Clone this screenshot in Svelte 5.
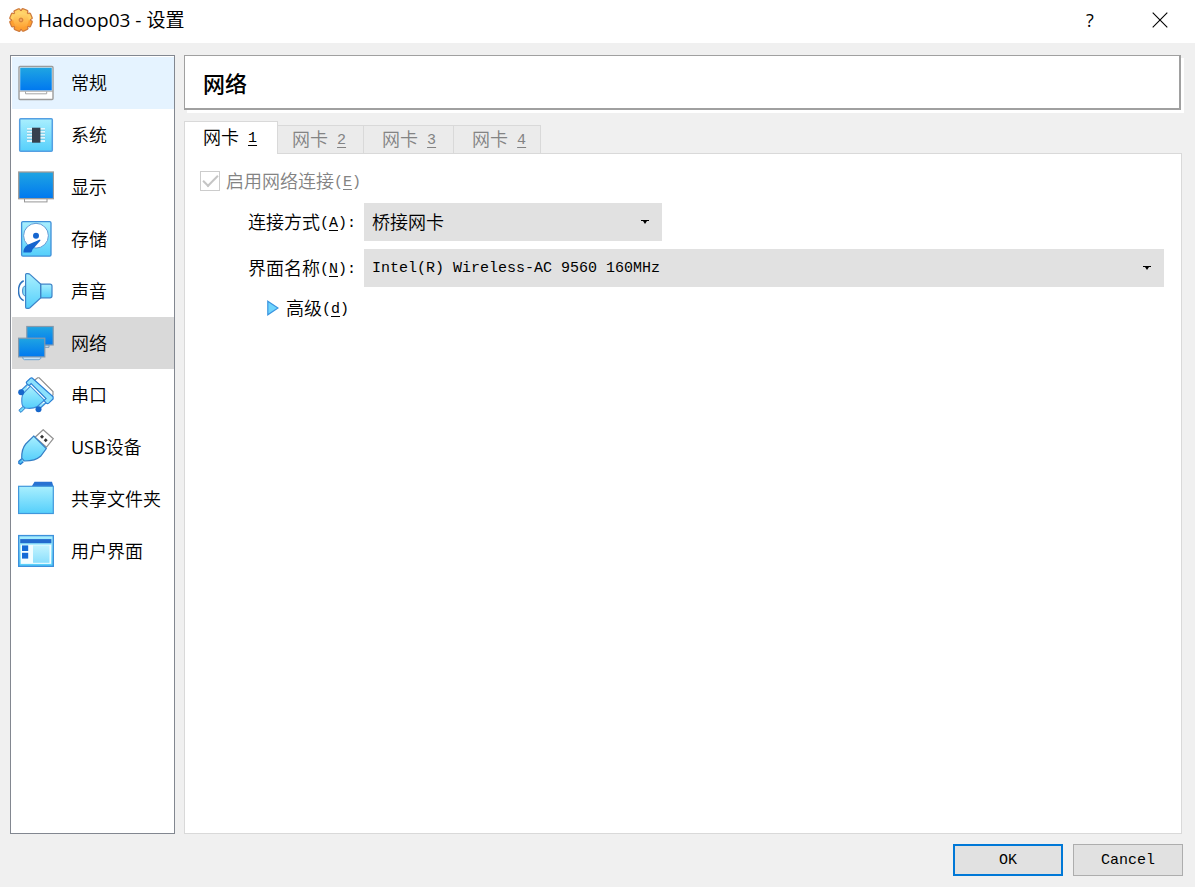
<script>
  const sections = [
    { id: 'general', label: '常规' },
    { id: 'system', label: '系统' },
    { id: 'display', label: '显示' },
    { id: 'storage', label: '存储' },
    { id: 'audio', label: '声音' },
    { id: 'network', label: '网络' },
    { id: 'serial', label: '串口' },
    { id: 'usb', prefix: 'USB', label: '设备' },
    { id: 'folders', label: '共享文件夹' },
    { id: 'interface', label: '用户界面' }
  ];
  const adapters = [1, 2, 3, 4];
  const teeth = [22, 67, 112, 157, 202, 247, 292, 337];
</script>

<div class="dialog">
  <header class="titlebar">
    <svg class="gear" viewBox="0 0 24 24" aria-hidden="true">
      <defs>
        <linearGradient id="gold" gradientUnits="userSpaceOnUse" x1="0" y1="2" x2="0" y2="22">
          <stop offset="0" stop-color="#ffe07a" />
          <stop offset="1" stop-color="#ff9a2a" />
        </linearGradient>
      </defs>
      <g fill="#cf7a3c" stroke="#cf7a3c" stroke-width="1.6">
        <circle cx="12" cy="12" r="9" />
        {#each teeth as a}
          <rect x="9" y="1" width="6" height="5" rx="1" transform="rotate({a} 12 12)" />
        {/each}
      </g>
      <circle cx="12" cy="12" r="9" fill="url(#gold)" />
      {#each teeth as a}
        <rect x="9.3" y="1.4" width="5.4" height="5" rx="1" fill={a > 90 && a < 270 ? '#fd9f30' : '#ffd064'} transform="rotate({a} 12 12)" />
      {/each}
      <circle cx="12" cy="12" r="7.8" fill="url(#gold)" />
      <circle cx="12" cy="12" r="1.9" fill="#f0a45c" stroke="#d07a34" />
    </svg>
    <h1>Hadoop03 - 设置</h1>
    <button class="window-button" aria-label="Help">?</button>
    <button class="window-button" aria-label="Close">
      <svg width="16" height="16" viewBox="0 0 16 16"><path d="M.7.7l14.6 14.6M15.3.7L.7 15.3" stroke="#000" stroke-width="1.1" /></svg>
    </button>
  </header>

  <div class="body">
    <nav class="sidebar">
      {#each sections as s}
        <button class="section" class:hover={s.id === 'general'} class:current={s.id === 'network'}>
          <svg class="icon" viewBox="0 0 36 36" aria-hidden="true">
            <defs>
              <linearGradient id="screen-{s.id}" x1="0" y1="0" x2="0" y2="1">
                <stop offset="0" stop-color="#1fa5e2" />
                <stop offset="1" stop-color="#0078f0" />
              </linearGradient>
              <linearGradient id="sky-{s.id}" x1="0" y1="0" x2="0" y2="1">
                <stop offset="0" stop-color="#a9effe" />
                <stop offset="1" stop-color="#55cffb" />
              </linearGradient>
            </defs>
            {#if s.id === 'general'}
              <rect x="1" y="1.5" width="34" height="33" rx="1" fill="#fff" stroke="#9c9c9c" stroke-width="1.4" />
              <rect x="2.2" y="2.7" width="31.6" height="22.8" fill="url(#screen-general)" />
              <path d="M1 26.2h34M7.5 26.5v2.3h21.2v-2.3" fill="none" stroke="#a6a6a6" />
            {:else if s.id === 'system'}
              <rect x="1.7" y="1.7" width="32.6" height="32.6" rx="1" fill="url(#sky-system)" stroke="#559fe2" stroke-width="1.5" />
              <path d="M9 12h18M9 15h18M9 18h18M9 21h18M9 24h18" stroke="#fff" stroke-width="1.4" />
              <path d="M9 13h18M9 16h18M9 19h18M9 22h18" stroke="#6fb2cf" stroke-width=".6" />
              <rect x="14" y="10.7" width="8.4" height="15" fill="#36414f" />
            {:else if s.id === 'display'}
              <rect x="6.5" y="29.5" width="22.5" height="3.4" fill="#fff" stroke="#969696" />
              <rect x=".7" y="3" width="34.8" height="26.7" fill="url(#screen-display)" stroke="#a09c99" stroke-width="1.3" />
            {:else if s.id === 'storage'}
              <rect x="3.6" y=".7" width="29.4" height="34.4" rx="1.3" fill="url(#sky-storage)" stroke="#3f8fd8" stroke-width="1.3" />
              <circle cx="18" cy="14.7" r="12.4" fill="#fff" stroke="#5f9bd6" />
              <circle cx="18" cy="14.8" r="3" fill="#1565cf" />
              <path d="M22 18.6L9.8 23.8Q5.2 26.7 5.3 31.6H12.5Q14 31.2 14.5 28.6L22.5 19.6Z" fill="#1565cf" />
            {:else if s.id === 'audio'}
              <path d="M5.7 7.7C-1.2 11-1.2 24.5 5.7 27.6" fill="none" stroke="#2f73bd" stroke-width="1.5" />
              <path d="M7.5 13Q4.6 13 4.6 18T7.5 22.8z" fill="#87dffa" stroke="#3e84c8" />
              <path d="M22.7 11.2H32q2 0 2 2v9.6q0 2-2 2h-9.3z" fill="url(#sky-audio)" stroke="#3e84c8" stroke-width="1.2" />
              <path d="M7.6 1.5Q7.7.5 9 .6 11.2.5 12 1.4L22.6 11v14L12 34.8q-1.4.9-3 .6-1.4-.2-1.4-1.2z" fill="url(#sky-audio)" stroke="#3e84c8" stroke-width="1.2" />
            {:else if s.id === 'network'}
              <path d="M13 20h18v2.3H13z" fill="#c6e2f8" stroke="#7c98b2" />
              <rect x="8.8" y="1.5" width="26.4" height="18.5" fill="url(#screen-network)" stroke="#8599ac" stroke-width="1.2" />
              <path d="M4.8 31.5h18v2L21 34.7H6.5l-1.7-1.2z" fill="#c6e2f8" stroke="#6ea2cf" />
              <rect x=".6" y="13.2" width="26.2" height="18.7" fill="url(#screen-network)" stroke="#8599ac" stroke-width="1.2" />
            {:else if s.id === 'serial'}
              <path d="M16.5 3.2L19.7.8h1.5L35 14.6V18l-2.7 2.2z" fill="#fff" stroke="#8c8c8c" stroke-width="1.1" />
              <path d="M5.5 29L.8 33.4l2.2 2L7.3 31" fill="#71d9fb" stroke="#2878ca" />
              <path d="M11.7 5.2L3 13.5 6 17M30 24l-9.6 8.8-3-3" fill="#94e6fc" stroke="#3c8bd8" stroke-width="1.3" />
              <path d="M12.4 9.2L5.2 16.5Q3.2 20 4 27q.5 3 3.4 4 7 1.2 12-1.5l7-6.3z" fill="url(#sky-serial)" stroke="#3c8bd8" stroke-width="1.1" />
              <path d="M11.4 2.2L8.6 4.9Q8 5.7 8.8 6.6l2.3 2 2-2L28 21.6l-2 2 2.5 2.7q1.1.8 2.2-.2l4.4-4.2v-2.2L14.2 1q-1.4-.6-2.8 1.2z" fill="#8ce1fd" stroke="#2b7fd4" stroke-width="1.2" />
              <circle cx="3.2" cy="15.3" r="3" fill="#1767cb" /><circle cx="20.5" cy="32.2" r="3" fill="#1767cb" />
            {:else if s.id === 'usb'}
              <path d="M17 8.3L25.2.7 35.3 9.7 28.5 18.2z" fill="#fff" stroke="#929292" stroke-width="1.2" />
              <path d="M22 7.7l2-2 2 2-2 2zM25.7 11.2l2-2 2 2-2 2z" fill="#333" />
              <path d="M15.7 7L28.3 19.6 22.6 27.3Q17 32.2 6.2 32l-2.5-2.8Q3.5 20 7.7 15z" fill="url(#sky-usb)" stroke="#347ec5" stroke-width="1.2" />
              <path d="M3.7 29.8L.8 32.3v2l1.7 1 2.9-2.6" fill="#50bef2" stroke="#2679cd" stroke-width="1.2" />
            {:else if s.id === 'folders'}
              <path d="M13.7 5.5L16.5.8H34l1.4 4.7z" fill="#2872d2" />
              <rect x=".6" y="5.3" width="34.7" height="27.2" fill="url(#sky-folders)" stroke="#4097dc" stroke-width="1.2" />
            {:else}
              <rect x=".7" y="2.6" width="34.6" height="30.7" fill="url(#sky-interface)" stroke="#3d91dc" stroke-width="1.4" />
              <rect x="2.2" y="6.1" width="31.2" height="4.1" fill="#226bce" />
              <rect x="2.7" y="11.7" width="30.5" height="19.2" fill="#f2fdff" />
              <rect x="4" y="12.4" width="6.2" height="5.6" fill="#146bd6" /><rect x="4" y="19.8" width="6.2" height="5.8" fill="#146bd6" />
              <rect x="15" y="12.4" width="16.5" height="17.4" fill="url(#sky-interface)" opacity=".65" />
            {/if}
          </svg>
          <span class="name">{#if s.prefix}<span class="latin">{s.prefix}</span>{/if}{s.label}</span>
        </button>
      {/each}
    </nav>

    <main>
      <div class="heading"><h2>网络</h2></div>
      <div class="tabs" role="tablist">
        {#each adapters as n}
          <button role="tab" class="tab" class:active={n === 1} aria-selected={n === 1} disabled={n !== 1}>网卡<span class="mono">&nbsp;<u>{n}</u></span></button>
        {/each}
      </div>
      <section class="pane">
        <label class="enable">
          <input type="checkbox" checked disabled />
          <span>启用网络连接<span class="mono">(<u>E</u>)</span></span>
        </label>
        <div class="form">
          <label for="attached">连接方式<span class="mono">(<u>A</u>):</span></label>
          <div class="combo short">
            <select id="attached"><option>桥接网卡</option></select>
            <svg class="arrow" viewBox="0 0 8 4" aria-hidden="true"><path d="M0 0h8v1H6L4 4 2 1H0z" /></svg>
          </div>
          <label for="adapter">界面名称<span class="mono">(<u>N</u>):</span></label>
          <div class="combo">
            <select id="adapter" class="mono"><option>Intel(R) Wireless-AC 9560 160MHz</option></select>
            <svg class="arrow" viewBox="0 0 8 4" aria-hidden="true"><path d="M0 0h8v1H6L4 4 2 1H0z" /></svg>
          </div>
        </div>
        <button class="advanced" aria-expanded="false">
          <svg width="12" height="16" viewBox="0 0 12 16" aria-hidden="true"><path d="M.8 1.2L11 8 .8 14.8z" fill="#6fd4fc" stroke="#3a94e0" stroke-width="1.2" /></svg>
          <span>高级<span class="mono">(<u>d</u>)</span></span>
        </button>
      </section>
    </main>
  </div>

  <footer>
    <button class="action primary mono">OK</button>
    <button class="action mono">Cancel</button>
  </footer>
</div>

<style>
  :global(body) { margin: 0; background: #f0f0f0; }
  .dialog {
    display: flex;
    flex-direction: column;
    box-sizing: border-box;
    min-height: 100vh;
    background: #f0f0f0;
    color: #000;
    font: 350 18px/24px "Noto Sans CJK SC", sans-serif;
  }
  button, select { margin: 0; padding: 0; border: 0; border-radius: 0; color: inherit; font: inherit; background: none; }
  h1, h2 { margin: 0; }
  u { text-underline-offset: 3px; text-decoration-thickness: 1px; }
  .mono { font-family: "Liberation Mono", monospace; font-size: 15px; font-weight: 400; }
  span.mono { line-height: 15px; vertical-align: 2px; }
  .latin { font-family: "Open Sans", sans-serif; font-weight: 400; }

  .titlebar { display: flex; align-items: center; box-sizing: border-box; height: 43px; padding: 0 0 3px 9px; background: #fff; }
  .gear { width: 24px; height: 24px; margin-right: 5px; }
  h1 { flex: 1; font: 400 19px/24px "Open Sans", "Noto Sans CJK SC", sans-serif; }
  .window-button { display: grid; place-items: center; width: 70px; height: 40px; font-family: "Open Sans", sans-serif; font-weight: 400; }

  .body { display: flex; flex: 1; gap: 9px; padding: 12px 12px 0 10px; }
  .sidebar { display: flex; flex-direction: column; box-sizing: border-box; flex: 0 0 165px; padding: 1px 0 0 1px; border: 1px solid #828790; background: #fff; }
  .section { display: flex; align-items: center; gap: 17px; height: 52px; padding-left: 6px; text-align: left; white-space: nowrap; }
  .name { padding-bottom: 2px; }
  .section.hover { background: #e5f3ff; }
  .section.current { background: #d9d9d9; }
  .icon { flex: none; width: 36px; height: 36px; }

  main { display: flex; flex: 1; flex-direction: column; min-width: 0; }
  .heading { margin: 0 2px 11px 0; padding: 15px 18px; border: 1px solid #a0a0a0; border-width: 1px 2px 2px 1px; box-shadow: 3px 3px #fff; background: #fff; }
  h2 { font: 500 22px/22px "Noto Sans CJK SC", sans-serif; }
  .tabs { display: flex; align-items: flex-end; height: 32px; }
  .tab { box-sizing: border-box; height: 28px; padding: 0 17px 4px 18px; border: 1px solid #d9d9d9; border-width: 1px 1px 0 0; background: #ebebeb; color: #838383; line-height: 24px; white-space: nowrap; }
  .tab:last-child { padding-right: 14px; }
  .tab.active { position: relative; z-index: 1; height: 33px; margin: 0 -4px -1px 0; padding-right: 20px; border-left-width: 1px; background: #fff; color: #000; }
  .pane { flex: 1; margin-right: 1px; padding: 15px 17px 0 15px; border: 1px solid #d9d9d9; background: #fff; }
  .enable { display: flex; align-items: center; gap: 6px; height: 24px; color: #838383; }
  .enable span, .advanced span, .form label { padding-bottom: 2px; }
  .enable input { display: grid; place-items: center; box-sizing: border-box; width: 20px; height: 20px; margin: 0; border: 1px solid #ccc; background: #fff; appearance: none; }
  .enable input::after { content: ""; box-sizing: border-box; width: 15px; height: 8px; margin-bottom: 5px; border: solid #c5c5c5; border-width: 0 0 2px 2px; transform: rotate(-45deg); }
  .form { display: grid; grid-template-columns: 156px 1fr; gap: 8px; align-items: center; margin-top: 10px; }
  .form label { text-align: right; white-space: nowrap; }
  .combo { position: relative; }
  .combo.short { max-width: 298px; }
  select { display: block; width: 100%; height: 38px; padding: 0 32px 3px 8px; background: #e1e1e1; appearance: none; }
  select.mono { padding: 2px 32px 0 8px; }
  .arrow { position: absolute; top: 17px; right: 13px; width: 8px; height: 4px; pointer-events: none; }
  .advanced { display: flex; align-items: center; gap: 7px; height: 24px; margin: 9px 0 0 67px; }

  footer { display: flex; justify-content: flex-end; gap: 10px; padding: 10px 12px 11px; }
  .action { width: 110px; height: 32px; padding-top: 2px; border: 1px solid #adadad; background: #e1e1e1; }
  .action.primary { border: 2px solid #0078d7; }
</style>
